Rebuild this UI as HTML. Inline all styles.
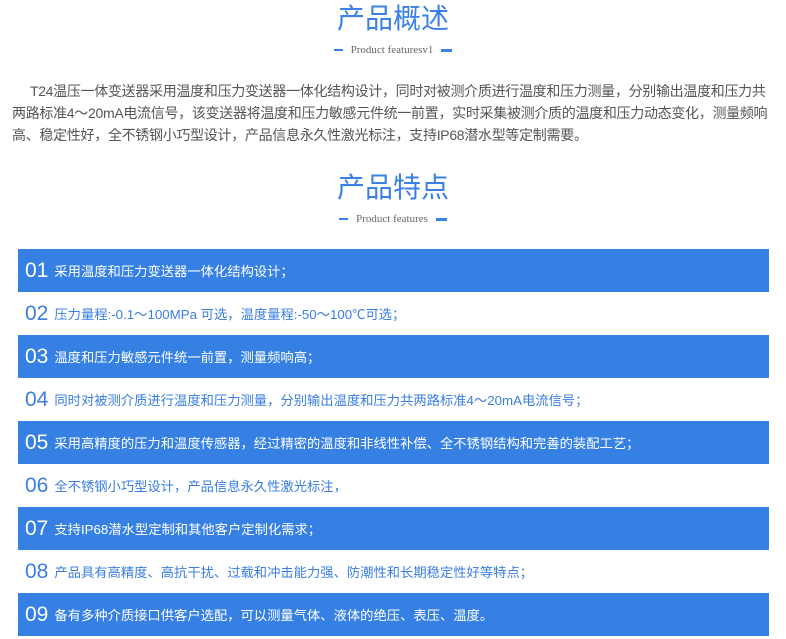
<!DOCTYPE html>
<html><head><meta charset="utf-8"><style>
body{margin:0;width:786px;height:639px;background:#fff;font-family:"Liberation Sans","Noto Sans CJK SC",sans-serif;overflow:hidden}
.t{position:absolute;left:0;width:786px;text-align:center;color:#3a80e6;font-size:28px;line-height:32px}
.s{position:absolute;left:0;width:786px;text-align:center;color:#666;font-family:"Liberation Serif","Noto Serif CJK SC",serif;font-size:11px;line-height:14px}
.s i{display:inline-block;width:9px;height:2px;background:#3a80e6;vertical-align:middle;margin:0 8px}
.s b{display:inline-block;width:11px;height:3px;background:#3a80e6;vertical-align:middle;margin:0 8px}
p{position:absolute;left:12px;top:80px;width:770px;margin:0;font-size:14px;line-height:22px;color:#555;white-space:nowrap;letter-spacing:-0.3px}
.r{position:absolute;left:18px;width:751px;height:43px;line-height:43px;font-size:13.3px;color:#3a7ee0;white-space:nowrap}
.r span{font-size:21px;margin:0 6px 0 7px;vertical-align:-1px}
.b{background:#3580e2;color:#fff}
</style></head><body>
<div class="t" style="top:3px">产品概述</div>
<div class="s" style="top:43px"><i></i>Product featuresv1<b></b></div>
<p>&nbsp;&nbsp;&nbsp;&nbsp;&nbsp;T24温压一体变送器采用温度和压力变送器一体化结构设计，同时对被测介质进行温度和压力测量，分别输出温度和压力共<br>两路标准4～20mA电流信号，该变送器将温度和压力敏感元件统一前置，实时采集被测介质的温度和压力动态变化，测量频响<br>高、稳定性好，全不锈钢小巧型设计，产品信息永久性激光标注，支持IP68潜水型等定制需要。</p>
<div class="t" style="top:172px">产品特点</div>
<div class="s" style="top:212px"><i></i>Product features<b></b></div>
<div class="r b" style="top:249px"><span>01</span>采用温度和压力变送器一体化结构设计；</div>
<div class="r" style="top:292px"><span>02</span>压力量程:-0.1～100MPa 可选，温度量程:-50～100℃可选；</div>
<div class="r b" style="top:335px"><span>03</span>温度和压力敏感元件统一前置，测量频响高；</div>
<div class="r" style="top:378px"><span>04</span>同时对被测介质进行温度和压力测量，分别输出温度和压力共两路标准4～20mA电流信号；</div>
<div class="r b" style="top:421px"><span>05</span>采用高精度的压力和温度传感器，经过精密的温度和非线性补偿、全不锈钢结构和完善的装配工艺；</div>
<div class="r" style="top:464px"><span>06</span>全不锈钢小巧型设计，产品信息永久性激光标注，</div>
<div class="r b" style="top:507px"><span>07</span>支持IP68潜水型定制和其他客户定制化需求；</div>
<div class="r" style="top:550px"><span>08</span>产品具有高精度、高抗干扰、过载和冲击能力强、防潮性和长期稳定性好等特点；</div>
<div class="r b" style="top:593px"><span>09</span>备有多种介质接口供客户选配，可以测量气体、液体的绝压、表压、温度。</div>
</body></html>
